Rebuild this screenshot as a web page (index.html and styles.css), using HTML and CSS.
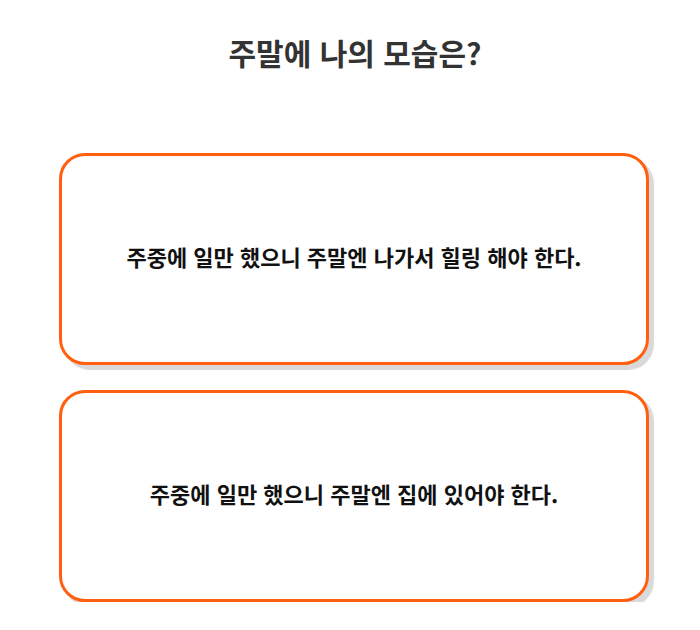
FILE: index.html
```html
<!DOCTYPE html>
<html lang="ko">
<head>
<meta charset="utf-8">
<title>주말에 나의 모습은?</title>
<link rel="stylesheet" href="styles.css">
</head>
<body>
<main class="quiz">
  <h1 class="quiz-title">주말에 나의 모습은?</h1>
  <div class="choices">
    <button class="choice" type="button">주중에 일만 했으니 주말엔 나가서 힐링 해야 한다.</button>
    <button class="choice" type="button">주중에 일만 했으니 주말엔 집에 있어야 한다.</button>
  </div>
</main>
</body>
</html>
```

FILE: styles.css
```css
html, body {
  margin: 0;
  padding: 0;
  background: #ffffff;
}

body {
  font-family: "Noto Sans CJK KR", "Noto Sans", sans-serif;
}

.quiz {
  width: 700px;
  padding: 30px 0 0;
  box-sizing: border-box;
}

.quiz-title {
  margin: 0 0 0 10px;
  text-align: center;
  font-size: 30px;
  font-weight: 700;
  line-height: 44px;
  color: #333333;
}

.choices {
  display: flex;
  flex-direction: column;
  gap: 25px;
  margin: 79px 51px 0 59px;
}

.choice {
  display: flex;
  align-items: center;
  justify-content: center;
  height: 212px;
  box-sizing: border-box;
  border: 3px solid #ff5f0f;
  border-radius: 26px;
  background: #ffffff;
  box-shadow: 5px 5px 1px #d9d9d9;
  font-family: inherit;
  font-size: 22px;
  font-weight: 700;
  line-height: 30px;
  color: #111111;
  padding: 0 0 6px;
  cursor: pointer;
}
```
